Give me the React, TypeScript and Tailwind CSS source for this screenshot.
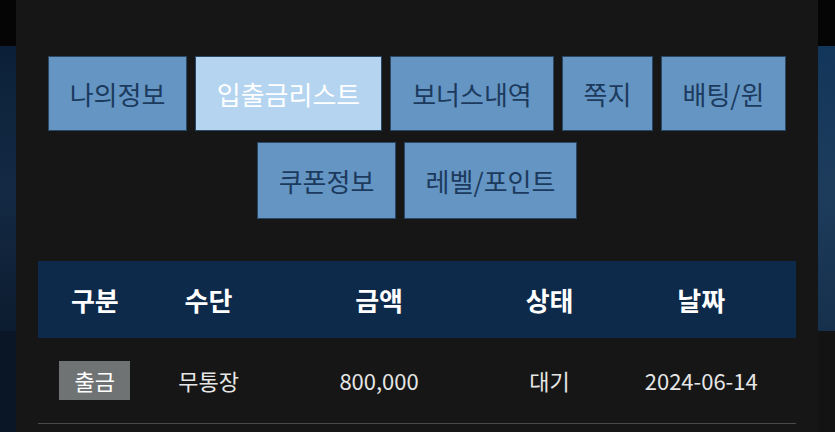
const tabs = [
  [
    { label: "나의정보", width: "w-[139px]" },
    { label: "입출금리스트", width: "w-[187px]" },
    { label: "보너스내역", width: "w-[164px]" },
    { label: "쪽지", width: "w-[91px]" },
    { label: "배팅/윈", width: "w-[125px]" },
  ],
  [
    { label: "쿠폰정보", width: "w-[139px]" },
    { label: "레벨/포인트", width: "w-[173px]" },
  ],
];

const active = "입출금리스트";

const columns = [
  { label: "구분", width: "w-[15%]" },
  { label: "수단", width: "w-[15%]" },
  { label: "금액", width: "w-[30%]" },
  { label: "상태", width: "w-[15%]" },
  { label: "날짜", width: "w-[25%]" },
];

function TabButton({ label, width, height }: { label: string; width: string; height: string }) {
  const isActive = label === active;
  return (
    <button
      className={`${width} ${height} text-[26px] leading-none border border-[#2a4866] ${
        isActive ? "bg-[#b4d4f0] text-white" : "bg-[#6495c3] text-[#1c3a5d]"
      }`}
    >
      {label}
    </button>
  );
}

export default function App() {
  return (
    <div
      className="flex h-[432px] w-[835px] overflow-hidden bg-black"
      style={{ fontFamily: '"Noto Sans CJK KR", "Noto Sans", sans-serif' }}
    >
      {/* left backdrop strip */}
      <div className="flex w-[16px] flex-col">
        <div className="h-[46px] bg-[#050505]" />
        <div className="h-[285px] bg-gradient-to-b from-[#0b2038] via-[#142a44] to-[#0c1c30]" />
        <div className="flex-1 bg-[#0a1626]" />
      </div>

      {/* main panel */}
      <div className="flex flex-1 flex-col bg-[#161616] pt-[56px]">
        <div className="flex flex-col items-center gap-[11px]">
          {tabs.map((row, i) => (
            <div key={i} className="flex gap-2">
              {row.map((t) => (
                <TabButton
                  key={t.label}
                  label={t.label}
                  width={t.width}
                  height={i === 0 ? "h-[75px]" : "h-[77px]"}
                />
              ))}
            </div>
          ))}
        </div>

        <div className="mx-[22px] mt-[42px]">
          <div className="flex h-[77px] items-center bg-[#0e2a4b] text-[26px] font-bold text-white">
            {columns.map((c) => (
              <div key={c.label} className={`${c.width} text-center`}>
                {c.label}
              </div>
            ))}
          </div>
          <div className="flex h-[86px] items-center border-b border-[#4a4a4a] text-[22px] text-[#e6e6e6]">
            <div className="w-[15%] flex justify-center">
              <span className="flex h-[39px] w-[71px] items-center justify-center bg-[#707374] text-white">
                출금
              </span>
            </div>
            <div className="w-[15%] text-center">무통장</div>
            <div className="w-[30%] text-center">800,000</div>
            <div className="w-[15%] text-center">대기</div>
            <div className="w-[25%] text-center">2024-06-14</div>
          </div>
        </div>
      </div>

      {/* right backdrop strip */}
      <div className="flex w-[17px] flex-col">
        <div className="h-[46px] bg-[#050505]" />
        <div className="h-[285px] bg-gradient-to-b from-[#12365a] via-[#1d3c5c] to-[#16304c]" />
        <div className="flex-1 bg-[#131313]" />
      </div>
    </div>
  );
}
